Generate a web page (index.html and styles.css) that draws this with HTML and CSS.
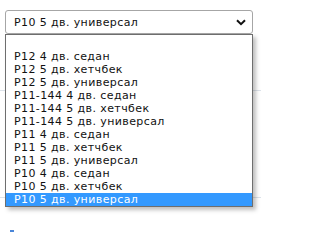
FILE: index.html
```html
<!DOCTYPE html>
<html lang="ru">
<head>
<meta charset="utf-8">
<link rel="stylesheet" href="styles.css">
</head>
<body>
<div class="page">
  <div class="field">
    <div class="select">
      <span class="value">P10 5 дв. универсал</span>
      <svg class="chev" width="10" height="7" viewBox="0 0 10 7"><path d="M1 1.2 L5 5.2 L9 1.2" fill="none" stroke="#111" stroke-width="2"/></svg>
    </div>
    <ul class="list">
      <li class="opt">&nbsp;</li>
      <li class="opt">P12 4 дв. седан</li>
      <li class="opt">P12 5 дв. хетчбек</li>
      <li class="opt">P12 5 дв. универсал</li>
      <li class="opt">P11-144 4 дв. седан</li>
      <li class="opt">P11-144 5 дв. хетчбек</li>
      <li class="opt">P11-144 5 дв. универсал</li>
      <li class="opt">P11 4 дв. седан</li>
      <li class="opt">P11 5 дв. хетчбек</li>
      <li class="opt">P11 5 дв. универсал</li>
      <li class="opt">P10 4 дв. седан</li>
      <li class="opt">P10 5 дв. хетчбек</li>
      <li class="opt selected">P10 5 дв. универсал</li>
    </ul>
  </div>
  <div class="rule rule-top"></div>
  <div class="rule rule-bottom"></div>
  <div class="mark"></div>
</div>
</body>
</html>
```

FILE: styles.css
```css
html, body {
  margin: 0;
  padding: 0;
  background: #fff;
}
body {
  font-family: "DejaVu Sans", sans-serif;
  font-size: 11px;
  letter-spacing: 0.4px;
  color: #111;
}
.page {
  position: relative;
  width: 261px;
  height: 232px;
  overflow: hidden;
}
.field {
  position: absolute;
  left: 5px;
  top: 10px;
  width: 248px;
  z-index: 2;
}
.select {
  box-sizing: border-box;
  height: 24px;
  border: 1px solid #a6a6a6;
  border-radius: 3px;
  display: flex;
  align-items: center;
  justify-content: space-between;
  padding: 0 6px 0 8px;
  background: #fff;
}
.chev {
  display: block;
}
.list {
  list-style: none;
  margin: 0;
  padding: 2px 0 0;
  box-sizing: border-box;
  border: 1px solid #6e6e6e;
  background: #fff;
  box-shadow: 3px 3px 4px rgba(0,0,0,0.25);
}
.opt {
  height: 13px;
  line-height: 13px;
  padding-left: 8px;
  white-space: nowrap;
}
.opt.selected {
  background: #3399ff;
  color: #fff;
}
.rule {
  position: absolute;
  left: 0;
  right: 0;
  height: 1px;
  background: #dde3ea;
}
.rule-top { top: 90px; }
.rule-bottom { top: 197px; }
.mark {
  position: absolute;
  left: 10px;
  top: 230px;
  width: 4px;
  height: 2px;
  background: #4a86d8;
}
```
